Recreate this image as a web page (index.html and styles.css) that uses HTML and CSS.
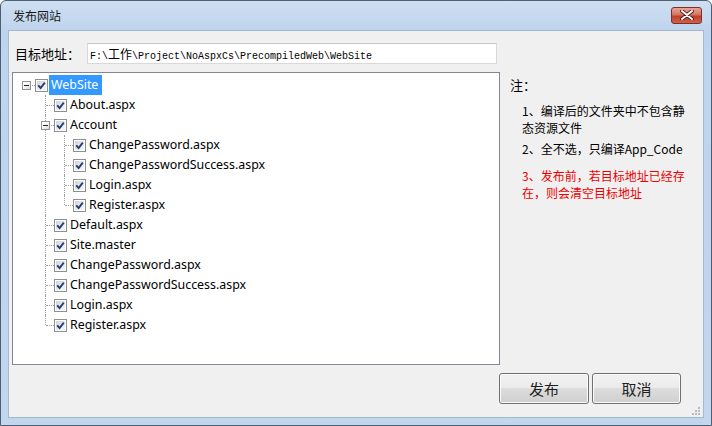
FILE: index.html
```
<!DOCTYPE html>
<html lang="zh-CN">
<head>
<meta charset="utf-8">
<title>发布网站</title>
<link rel="stylesheet" href="styles.css">
</head>
<body>
<div class="window">
  <div class="titlebar">
    <span class="title">发布网站</span>
    <span class="close"><svg width="14" height="10" viewBox="0 0 14 10"><path d="M2 1 L12 9 M12 1 L2 9" stroke="#4a1410" stroke-width="3.6" stroke-linecap="round"/><path d="M2 1 L12 9 M12 1 L2 9" stroke="#fff" stroke-width="2" stroke-linecap="round"/></svg></span>
  </div>
  <div class="client">
    <div class="addr">
      <span class="addr-label">目标地址：</span>
      <div class="input">F:\<span class="cjk">工作</span>\Project\NoAspxCs\PrecompiledWeb\WebSite</div>
    </div>
    <div class="main">
      <div class="tree">
        <ul>
          <li>
            <div class="row"><span class="exp"><span class="box"></span></span><span class="cb"><svg viewBox="0 0 9 9"><path d="M1.2 4.4 L3.6 7 L7.8 1.6"/></svg></span><span class="label sel">WebSite</span></div>
            <ul>
              <li><div class="row"><span class="exp"></span><span class="cb"><svg viewBox="0 0 9 9"><path d="M1.2 4.4 L3.6 7 L7.8 1.6"/></svg></span><span class="label">About.aspx</span></div></li>
              <li>
                <div class="row"><span class="exp"><span class="box"></span></span><span class="cb"><svg viewBox="0 0 9 9"><path d="M1.2 4.4 L3.6 7 L7.8 1.6"/></svg></span><span class="label">Account</span></div>
                <ul>
                  <li><div class="row"><span class="exp"></span><span class="cb"><svg viewBox="0 0 9 9"><path d="M1.2 4.4 L3.6 7 L7.8 1.6"/></svg></span><span class="label">ChangePassword.aspx</span></div></li>
                  <li><div class="row"><span class="exp"></span><span class="cb"><svg viewBox="0 0 9 9"><path d="M1.2 4.4 L3.6 7 L7.8 1.6"/></svg></span><span class="label">ChangePasswordSuccess.aspx</span></div></li>
                  <li><div class="row"><span class="exp"></span><span class="cb"><svg viewBox="0 0 9 9"><path d="M1.2 4.4 L3.6 7 L7.8 1.6"/></svg></span><span class="label">Login.aspx</span></div></li>
                  <li><div class="row"><span class="exp"></span><span class="cb"><svg viewBox="0 0 9 9"><path d="M1.2 4.4 L3.6 7 L7.8 1.6"/></svg></span><span class="label">Register.aspx</span></div></li>
                </ul>
              </li>
              <li><div class="row"><span class="exp"></span><span class="cb"><svg viewBox="0 0 9 9"><path d="M1.2 4.4 L3.6 7 L7.8 1.6"/></svg></span><span class="label">Default.aspx</span></div></li>
              <li><div class="row"><span class="exp"></span><span class="cb"><svg viewBox="0 0 9 9"><path d="M1.2 4.4 L3.6 7 L7.8 1.6"/></svg></span><span class="label">Site.master</span></div></li>
              <li><div class="row"><span class="exp"></span><span class="cb"><svg viewBox="0 0 9 9"><path d="M1.2 4.4 L3.6 7 L7.8 1.6"/></svg></span><span class="label">ChangePassword.aspx</span></div></li>
              <li><div class="row"><span class="exp"></span><span class="cb"><svg viewBox="0 0 9 9"><path d="M1.2 4.4 L3.6 7 L7.8 1.6"/></svg></span><span class="label">ChangePasswordSuccess.aspx</span></div></li>
              <li><div class="row"><span class="exp"></span><span class="cb"><svg viewBox="0 0 9 9"><path d="M1.2 4.4 L3.6 7 L7.8 1.6"/></svg></span><span class="label">Login.aspx</span></div></li>
              <li><div class="row"><span class="exp"></span><span class="cb"><svg viewBox="0 0 9 9"><path d="M1.2 4.4 L3.6 7 L7.8 1.6"/></svg></span><span class="label">Register.aspx</span></div></li>
            </ul>
          </li>
        </ul>
      </div>
      <div class="notes">
        <div class="notes-title">注：</div>
        <p class="note n1">1、编译后的文件夹中不包含静态资源文件</p>
        <p class="note n2">2、全不选，只编译App_Code</p>
        <p class="note n3 warn">3、发布前，若目标地址已经存在，则会清空目标地址</p>
      </div>
    </div>
    <div class="buttons">
      <button class="btn">发布</button>
      <button class="btn">取消</button>
    </div>
    <svg class="grip" width="8" height="8" viewBox="0 0 8 8"><g fill="#b9bcc1"><rect x="6" y="0" width="2" height="2"/><rect x="3" y="3" width="2" height="2"/><rect x="6" y="3" width="2" height="2"/><rect x="0" y="6" width="2" height="2"/><rect x="3" y="6" width="2" height="2"/><rect x="6" y="6" width="2" height="2"/></g></svg>
  </div>
</div>
</body>
</html>
```
FILE: styles.css
```
html, body {
  margin: 0;
  padding: 0;
  background: #fff;
}
.window {
  width: 712px;
  height: 426px;
  box-sizing: border-box;
  border: 1px solid #4d5f74;
  border-radius: 6px 6px 0 0;
  background: linear-gradient(180deg, #cfdff2 0px, #bed3ed 30px, #c2d6ee 100%);
  display: flex;
  flex-direction: column;
  font-family: "Noto Sans", "Noto Sans CJK SC", sans-serif;
  overflow: hidden;
}
.titlebar {
  height: 29px;
  flex: none;
  display: flex;
  align-items: center;
  padding-left: 12px;
  padding-right: 9px;
}
.title {
  font-family: "Noto Sans CJK SC", sans-serif;
  font-size: 12px;
  color: #1b1b1b;
  flex: 1;
  margin-top: -1px;
}
.close {
  width: 31px;
  height: 17px;
  box-sizing: border-box;
  border: 1px solid #7a302a;
  border-radius: 3px;
  background: linear-gradient(180deg, #e8a596 0%, #d5745f 45%, #c0402a 55%, #d0604a 100%);
  display: flex;
  align-items: center;
  justify-content: center;
  margin-top: -1px;
}
.close svg { display: block; }
.client {
  flex: 1;
  margin: 0 7px 7px 7px;
  border: 1px solid #a6b8cd;
  background: #f0f0f0;
  display: flex;
  flex-direction: column;
  position: relative;
}
.addr {
  display: flex;
  align-items: center;
  margin-top: 12px;
  padding-left: 6px;
  height: 21px;
}
.addr-label {
  font-family: "Noto Sans CJK SC", sans-serif;
  font-size: 13px;
  color: #000;
  width: 72px;
  flex: none;
}
.input {
  width: 410px;
  height: 21px;
  box-sizing: border-box;
  border: 1px solid #d9d9d9;
  border-top-color: #c9c9c9;
  background: #fff;
  font-family: "Liberation Mono", monospace;
  font-size: 10px;
  line-height: 19px;
  padding-left: 2px;
  color: #000;
  white-space: nowrap;
}
.input .cjk {
  font-family: "Noto Sans CJK SC", sans-serif;
  font-size: 12px;
}
.main {
  display: flex;
  margin-top: 8px;
  padding-left: 3px;
}
.tree {
  width: 488px;
  height: 293px;
  box-sizing: border-box;
  border: 1px solid #828790;
  background: #fff;
  padding: 2px 0 0 4px;
  flex: none;
}
.tree ul {
  list-style: none;
  margin: 0;
  padding: 0;
}
.tree ul ul {
  padding-left: 19px;
}
.tree li {
  position: relative;
}
.tree ul ul > li::before {
  content: "";
  position: absolute;
  left: 9px;
  top: 0;
  bottom: 0;
  border-left: 1px dotted #a0a0a0;
}
.tree ul ul > li:last-child::before {
  bottom: auto;
  height: 10px;
}
.row {
  display: flex;
  align-items: center;
  height: 20px;
  font-size: 12.4px;
  color: #000;
}
.exp {
  width: 18px;
  height: 20px;
  flex: none;
  position: relative;
}
.exp::before {
  content: "";
  position: absolute;
  left: 10px;
  right: 0;
  top: 10px;
  border-top: 1px dotted #a0a0a0;
}
.box {
  position: absolute;
  left: 5px;
  top: 6px;
  width: 9px;
  height: 9px;
  box-sizing: border-box;
  border: 1px solid #949494;
  background: linear-gradient(135deg, #ffffff 30%, #d8d8d8 100%);
  z-index: 1;
}
.box::after {
  content: "";
  position: absolute;
  left: 1px;
  top: 3px;
  width: 5px;
  height: 1px;
  background: #222;
}
.cb {
  width: 13px;
  height: 13px;
  box-sizing: border-box;
  border: 1px solid #8e8f8f;
  padding: 1px;
  background: #fff;
  flex: none;
  position: relative;
  z-index: 1;
}
.cb svg {
  display: block;
  width: 9px;
  height: 9px;
  background: linear-gradient(135deg, #cfd4db 0%, #e9ebee 60%, #f6f6f6 100%);
}
.cb path {
  fill: none;
  stroke: #253f74;
  stroke-width: 1.9;
}
.label {
  margin-left: 1px;
  padding: 0 3px 0 2px;
  line-height: 20px;
  white-space: nowrap;
}
.label.sel {
  background: #3399ff;
  color: #fff;
  padding-right: 4px;
}
.notes {
  margin-left: 10px;
  padding-top: 4px;
  width: 182px;
  font-family: "Noto Sans CJK SC", sans-serif;
  font-size: 12px;
  line-height: 17px;
  color: #000;
}
.notes-title {
  font-size: 13px;
}
.note {
  margin: 0;
  padding-left: 12px;
  width: 168px;
}
.n1 { margin-top: 9px; }
.n2 { margin-top: 4px; }
.n3 { margin-top: 10px; }
.warn { color: #ee0000; }
.buttons {
  display: flex;
  justify-content: flex-end;
  gap: 3px;
  margin-top: 8px;
  padding-right: 22px;
}
.btn {
  width: 90px;
  height: 31px;
  box-sizing: border-box;
  border: 1px solid #707070;
  border-radius: 3px;
  background: linear-gradient(180deg, #f2f2f2 0%, #ebebeb 49%, #dddddd 50%, #cfcfcf 100%);
  box-shadow: inset 0 0 0 1px #fbfbfb;
  font-family: "Noto Sans CJK SC", sans-serif;
  font-size: 15px;
  color: #1e1e1e;
  padding: 0;
}
.btn + .btn {
  width: 89px;
}
.grip {
  position: absolute;
  right: 3px;
  bottom: 2px;
}
```
